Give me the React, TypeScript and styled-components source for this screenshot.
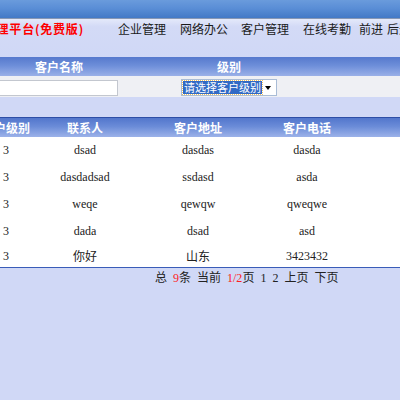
import { createGlobalStyle, styled } from "styled-components";

const GlobalStyle = createGlobalStyle`
  html, body {
    margin: 0;
    padding: 0;
  }
  body {
    background: #d0d8f6;
    font-family: "Liberation Serif", "Noto Sans CJK SC", serif;
    font-size: 12px;
    color: #111;
    overflow: hidden;
  }
`;

const Page = styled.div`
  width: 400px;
  height: 400px;
  overflow: hidden;
  background: #d0d8f6;
`;

const Banner = styled.div`
  height: 18px;
  background: linear-gradient(180deg, #6a9bdc 0%, #5a8ed6 45%, #4379c6 100%);
  border-bottom: 1px solid #8797b4;
`;

const NavBar = styled.div`
  height: 38px;
  box-sizing: border-box;
  padding-top: 2px;
  display: flex;
  align-items: flex-start;
  overflow: hidden;
  background: linear-gradient(180deg, #e4e9fa 0%, #d3daf6 20%, #d0d8f6 100%);
  font-family: "Noto Sans CJK SC", sans-serif;
  line-height: 15px;
`;

const Title = styled.div`
  flex: none;
  width: 84px;
  display: flex;
  justify-content: flex-end;
  overflow: hidden;
  white-space: nowrap;
  color: #ff0000;
  font-weight: bold;
  letter-spacing: 0.8px;
`;

const NavItem = styled.span<{ $w: number }>`
  width: ${(p) => p.$w}px;
  flex: none;
  white-space: nowrap;
  color: #1a1a1a;
`;

const NavGap = styled.span<{ $w: number }>`
  width: ${(p) => p.$w}px;
  flex: none;
`;

const SearchHead = styled.div`
  height: 19px;
  display: grid;
  grid-template-columns: 118px 222px 1fr;
  align-items: center;
  background: linear-gradient(180deg, #5679cd 0%, #6d8ed9 45%, #9ab0e8 100%);
  color: #fff;
  font-family: "Noto Sans CJK SC", sans-serif;
  font-weight: bold;
  text-align: center;
  line-height: 19px;
`;

const SearchRow = styled.div`
  height: 21px;
  box-sizing: border-box;
  padding-top: 3px;
  display: grid;
  grid-template-columns: 118px 222px 1fr;
  align-items: start;
  background: #eff0f4;
`;

const TextBox = styled.div`
  height: 16px;
  box-sizing: border-box;
  margin-top: 1px;
  background: #fff;
  border: 1px solid #c3c7cf;
  border-left: none;
`;

const SelectCell = styled.div`
  display: flex;
  justify-content: center;
`;

const Select = styled.div`
  width: 96px;
  height: 17px;
  box-sizing: border-box;
  border: 1px solid #a9bcd6;
  background: #fff;
  display: flex;
  align-items: center;
  padding: 0 1px;
`;

const Selected = styled.span`
  background: #316ac5;
  color: #fff;
  font-family: "Noto Sans CJK SC", sans-serif;
  font-size: 11px;
  line-height: 13px;
  padding: 0 1px;
  outline: 1px dotted #f0c060;
  white-space: nowrap;
`;

const Arrow = styled.span`
  margin-left: auto;
  margin-right: 4px;
  width: 0;
  height: 0;
  border-left: 3.5px solid transparent;
  border-right: 3.5px solid transparent;
  border-top: 4px solid #000;
`;

const Spacer = styled.div`
  height: 20px;
`;

const Table = styled.div`
  margin-left: -39px;
  border-bottom: 1px solid #3a5cb8;
`;

const HeadRow = styled.div`
  height: 19px;
  display: grid;
  grid-template-columns: 90px 68px 158px 60px 1fr;
  align-items: center;
  border-top: 1px solid #2d4ea6;
  background: linear-gradient(180deg, #5276cc 0%, #6b8cd8 45%, #9cb2e9 100%);
  color: #fff;
  font-family: "Noto Sans CJK SC", sans-serif;
  font-weight: bold;
  text-align: center;
  white-space: nowrap;
`;

const Row = styled.div<{ $h: number }>`
  height: ${(p) => p.$h}px;
  display: grid;
  grid-template-columns: 90px 68px 158px 60px 1fr;
  align-items: center;
  background: #fff;
  text-align: center;
  white-space: nowrap;
  color: #222;
`;

const Pager = styled.div`
  padding: 2px 0 0 155px;
  line-height: 16px;
  word-spacing: 3px;
  white-space: pre;
  color: #222;
`;

const Red = styled.span`
  color: #ff2020;
`;

const menu = [
  { label: "企业管理", w: 62 },
  { label: "网络办公", w: 61 },
  { label: "客户管理", w: 62 },
  { label: "在线考勤", w: 56 },
  { label: "前进", w: 28 },
  { label: "后退", w: 40 },
];

const rows = [
  { level: "3", contact: "dsad", addr: "dasdas", phone: "dasda" },
  { level: "3", contact: "dasdadsad", addr: "ssdasd", phone: "asda" },
  { level: "3", contact: "weqe", addr: "qewqw", phone: "qweqwe" },
  { level: "3", contact: "dada", addr: "dsad", phone: "asd" },
  { level: "3", contact: "你好", addr: "山东", phone: "3423432" },
];

export default function App() {
  return (
    <Page>
      <GlobalStyle />
      <Banner />
      <NavBar>
        <Title>客户管理平台(免费版)</Title>
        <NavGap $w={34} />
        {menu.map((m) => (
          <NavItem key={m.label} $w={m.w}>
            {m.label}
          </NavItem>
        ))}
      </NavBar>
      <SearchHead>
        <span>客户名称</span>
        <span>级别</span>
        <span />
      </SearchHead>
      <SearchRow>
        <TextBox />
        <SelectCell>
          <Select>
            <Selected>请选择客户级别</Selected>
            <Arrow />
          </Select>
        </SelectCell>
        <span />
      </SearchRow>
      <Spacer />
      <Table>
        <HeadRow>
          <span>客户级别</span>
          <span>联系人</span>
          <span>客户地址</span>
          <span>客户电话</span>
          <span />
        </HeadRow>
        {rows.map((r, i) => (
          <Row key={i} $h={i === rows.length - 1 ? 22 : 27}>
            <span>{r.level}</span>
            <span>{r.contact}</span>
            <span>{r.addr}</span>
            <span>{r.phone}</span>
            <span />
          </Row>
        ))}
      </Table>
      <Pager>
        总 <Red>9</Red>条 当前 <Red>1/2</Red>页 1 2 上页 下页
      </Pager>
    </Page>
  );
}
